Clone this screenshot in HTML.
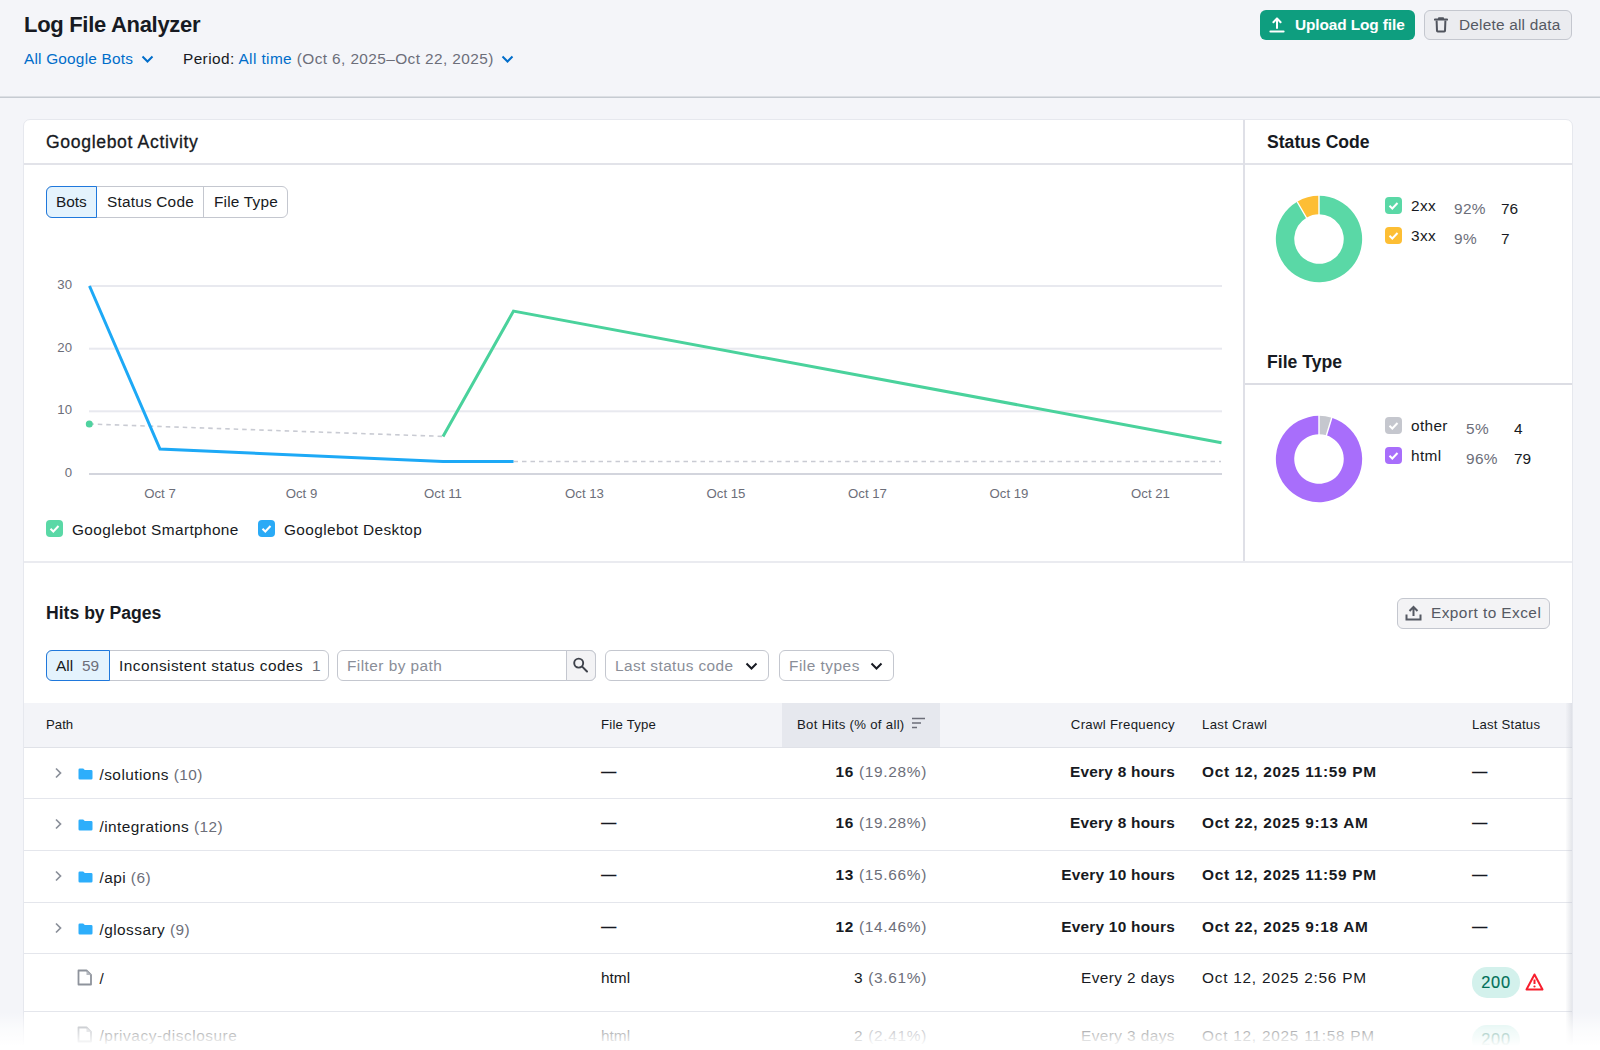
<!DOCTYPE html>
<html><head><meta charset="utf-8">
<style>
*{box-sizing:border-box;margin:0;padding:0}
html,body{width:1600px;height:1050px;overflow:hidden}
body{background:#F4F5F9;font-family:"Liberation Sans",sans-serif;color:#171A22;position:relative}
.a{position:absolute;white-space:nowrap}
.hdrline{position:absolute;left:0;top:96px;width:1600px;height:2px;background:linear-gradient(#DCDFE4 0 50%,#C6CBD2 50% 100%)}
.card{position:absolute;left:23px;top:119px;width:1550px;height:1000px;background:#fff;border:1px solid #E6E8EE;border-radius:7px;overflow:hidden}
.t14{font-size:15.4px}
.blue{color:#006DCA}
.grey{color:#6C6E79}
.btn{position:absolute;border-radius:6px}
.seg{position:absolute;border:1px solid #C4C7CF;border-radius:6px;background:#fff;overflow:hidden}
.seg .s{position:absolute;top:0;height:100%;border-right:1px solid #C4C7CF}
.chk{position:absolute;width:17px;height:17px;border-radius:4px}
.chk svg{position:absolute;left:0;top:0}
.line{position:absolute;background:#E4E6EC}
</style></head><body>

<!-- header -->
<div class="a" style="left:24px;top:10px;font-size:22px;font-weight:700;letter-spacing:-0.3px;line-height:30px">Log File Analyzer</div>
<div class="a blue t14" style="left:24px;top:50px;line-height:18px;letter-spacing:0.2px">All Google Bots</div>
<svg class="a" style="left:141px;top:54px" width="13" height="10" viewBox="0 0 13 10"><path d="M1.5 2.5 L6.5 7.5 L11.5 2.5" fill="none" stroke="#006DCA" stroke-width="2"/></svg>
<div class="a t14" style="left:183px;top:50px;line-height:18px;letter-spacing:0.4px">Period: <span class="blue">All time</span> <span class="grey">(Oct 6, 2025–Oct 22, 2025)</span></div>
<svg class="a" style="left:501px;top:54px" width="13" height="10" viewBox="0 0 13 10"><path d="M1.5 2.5 L6.5 7.5 L11.5 2.5" fill="none" stroke="#006DCA" stroke-width="2"/></svg>

<div class="btn" style="left:1260px;top:10px;width:155px;height:30px;background:#0E9E7F"></div>
<svg class="a" style="left:1269px;top:17px" width="16" height="16" viewBox="0 0 16 16"><path d="M8 11 V1.5 M4.4 5.3 L8 1.4 L11.6 5.3" fill="none" stroke="#fff" stroke-width="2" stroke-linecap="round" stroke-linejoin="round"/><path d="M1.4 14.5 H14.6" stroke="#fff" stroke-width="2" stroke-linecap="round"/></svg>
<div class="a" style="left:1295px;top:15px;font-size:15.4px;font-weight:700;color:#fff;line-height:20px;letter-spacing:-0.1px">Upload Log file</div>

<div class="btn" style="left:1424px;top:10px;width:148px;height:30px;background:#EBECF0;border:1px solid #C4C7CF"></div>
<svg class="a" style="left:1434px;top:17px" width="14" height="16" viewBox="0 0 14 16"><path d="M0.8 2.6 H13.2" stroke="#50545E" stroke-width="2" stroke-linecap="round"/><path d="M5 1.3 H9" stroke="#50545E" stroke-width="2.2" stroke-linecap="round"/><path d="M2.6 3.5 L3 13.8 Q3 14.6 3.8 14.6 H10.2 Q11 14.6 11 13.8 L11.4 3.5" fill="none" stroke="#50545E" stroke-width="2"/></svg>
<div class="a" style="left:1459px;top:15px;font-size:15.4px;color:#555963;line-height:20px;letter-spacing:0.2px">Delete all data</div>

<div class="hdrline"></div>

<!-- card -->
<div class="card"></div>

<svg class="a" style="left:0;top:0" width="1600" height="1050" viewBox="0 0 1600 1050">
  <!-- dividers -->
  <rect x="24" y="163" width="1548" height="2" fill="#E2E3E9"/>
  <rect x="1243" y="120" width="2" height="441" fill="#DFE0E7"/>
  <rect x="1245" y="383" width="327" height="2" fill="#DCDDE4"/>
  <rect x="24" y="561" width="1548" height="2" fill="#EAEBF0"/>
  <!-- gridlines -->
  <rect x="89" y="285" width="1133" height="2" fill="#E8E9EF"/>
  <rect x="89" y="347.7" width="1133" height="2" fill="#E8E9EF"/>
  <rect x="89" y="410.3" width="1133" height="2" fill="#E8E9EF"/>
  <rect x="89" y="473" width="1133" height="2" fill="#D3D5DD"/>
  <!-- dashed -->
  <path d="M89.3 424 L443 436.4" stroke="#C9CBD3" stroke-width="1.6" stroke-dasharray="4.5 4" fill="none"/>
  <path d="M513.5 461.5 L1221 461.5" stroke="#C9CBD3" stroke-width="1.6" stroke-dasharray="4.5 4" fill="none"/>
  <circle cx="89.3" cy="424" r="3.5" fill="#4FD29F"/>
  <!-- lines -->
  <path d="M89.5 286 L160 449 L443 461.5 L513.5 461.5" stroke="#1DA9F6" stroke-width="3" fill="none" stroke-linejoin="miter"/>
  <path d="M443 436.4 L513.5 311.1 L1221.5 442.7" stroke="#4AD29C" stroke-width="3" fill="none" stroke-linejoin="miter"/>
  <!-- donuts -->
  <path d="M1319.00 195.85 A43.15 43.15 0 1 1 1297.16 201.78 L1306.48 217.65 A24.75 24.75 0 1 0 1319.00 214.25Z" fill="#5AD8A6"/>
  <path d="M1297.16 201.78 A43.15 43.15 0 0 1 1319.00 195.85 L1319.00 214.25 A24.75 24.75 0 0 0 1306.48 217.65Z" fill="#FDBE34"/>
  <path d="M1319 195 V215 M1297 201.5 L1306.6 218" stroke="#fff" stroke-width="1.4"/>
  <path d="M1331.83 417.80 A43.15 43.15 0 1 1 1319.00 415.85 L1319.00 434.25 A24.75 24.75 0 1 0 1326.36 435.37Z" fill="#A86EFB"/>
  <path d="M1319.00 415.85 A43.15 43.15 0 0 1 1331.83 417.80 L1326.36 435.37 A24.75 24.75 0 0 0 1319.00 434.25Z" fill="#C5C7CE"/>
  <path d="M1319 415 V435 M1332 417 L1326.2 436" stroke="#fff" stroke-width="1.4"/>
</svg>

<!-- chart section text -->
<div class="a" style="left:46px;top:134px;font-size:17.6px;line-height:17.6px;letter-spacing:0.65px;-webkit-text-stroke:0.3px #171A22">Googlebot Activity</div>
<div class="a" style="left:1267px;top:134px;font-size:17.6px;line-height:17.6px;font-weight:700">Status Code</div>
<div class="a" style="left:1267px;top:354px;font-size:17.6px;line-height:17.6px;font-weight:700">File Type</div>

<div class="seg" style="left:46px;top:186px;width:242px;height:32px">
  <div class="s" style="left:51px;width:106px"></div>
</div>
<div class="a" style="left:46px;top:186px;width:51px;height:32px;border:1px solid #1F78DC;border-radius:6px 0 0 6px;background:#E4F3FD"></div>
<div class="a t14" style="left:56px;top:194px;line-height:15.4px">Bots</div>
<div class="a t14" style="left:107px;top:194px;line-height:15.4px;letter-spacing:0.2px">Status Code</div>
<div class="a t14" style="left:214px;top:194px;line-height:15.4px;letter-spacing:0.2px">File Type</div>

<!-- axis labels -->
<div class="a" style="left:40px;top:278px;width:32px;text-align:right;font-size:13.2px;line-height:13.2px;color:#6C6E79">30</div>
<div class="a" style="left:40px;top:341px;width:32px;text-align:right;font-size:13.2px;line-height:13.2px;color:#6C6E79">20</div>
<div class="a" style="left:40px;top:403px;width:32px;text-align:right;font-size:13.2px;line-height:13.2px;color:#6C6E79">10</div>
<div class="a" style="left:40px;top:466px;width:32px;text-align:right;font-size:13.2px;line-height:13.2px;color:#6C6E79">0</div>

<div class="a" style="left:110px;top:487px;width:100px;text-align:center;font-size:13.2px;line-height:13.2px;color:#6C6E79">Oct 7</div>
<div class="a" style="left:251.5px;top:487px;width:100px;text-align:center;font-size:13.2px;line-height:13.2px;color:#6C6E79">Oct 9</div>
<div class="a" style="left:393px;top:487px;width:100px;text-align:center;font-size:13.2px;line-height:13.2px;color:#6C6E79">Oct 11</div>
<div class="a" style="left:534.5px;top:487px;width:100px;text-align:center;font-size:13.2px;line-height:13.2px;color:#6C6E79">Oct 13</div>
<div class="a" style="left:676px;top:487px;width:100px;text-align:center;font-size:13.2px;line-height:13.2px;color:#6C6E79">Oct 15</div>
<div class="a" style="left:817.5px;top:487px;width:100px;text-align:center;font-size:13.2px;line-height:13.2px;color:#6C6E79">Oct 17</div>
<div class="a" style="left:959px;top:487px;width:100px;text-align:center;font-size:13.2px;line-height:13.2px;color:#6C6E79">Oct 19</div>
<div class="a" style="left:1100.5px;top:487px;width:100px;text-align:center;font-size:13.2px;line-height:13.2px;color:#6C6E79">Oct 21</div>

<!-- legend -->
<div class="chk" style="left:46px;top:520px;background:#5AD8A6"><svg width="17" height="17" viewBox="0 0 17 17"><path d="M4.5 8.8 L7.3 11.5 L12.5 6" fill="none" stroke="#fff" stroke-width="2"/></svg></div>
<div class="a t14" style="left:72px;top:522px;line-height:15.4px;letter-spacing:0.38px">Googlebot Smartphone</div>
<div class="chk" style="left:258px;top:520px;background:#2AAAF6"><svg width="17" height="17" viewBox="0 0 17 17"><path d="M4.5 8.8 L7.3 11.5 L12.5 6" fill="none" stroke="#fff" stroke-width="2"/></svg></div>
<div class="a t14" style="left:284px;top:522px;line-height:15.4px;letter-spacing:0.38px">Googlebot Desktop</div>

<!-- status legend -->
<div class="chk" style="left:1385px;top:197px;background:#5AD8A6"><svg width="17" height="17" viewBox="0 0 17 17"><path d="M4.5 8.8 L7.3 11.5 L12.5 6" fill="none" stroke="#fff" stroke-width="2"/></svg></div>
<div class="a t14" style="left:1411px;top:198px;line-height:15.4px;letter-spacing:0.35px">2xx</div>
<div class="a t14 grey" style="left:1454px;top:201px;line-height:15.4px;letter-spacing:0.35px">92%</div>
<div class="a t14" style="left:1501px;top:201px;line-height:15.4px">76</div>
<div class="chk" style="left:1385px;top:227px;background:#FDBE34"><svg width="17" height="17" viewBox="0 0 17 17"><path d="M4.5 8.8 L7.3 11.5 L12.5 6" fill="none" stroke="#fff" stroke-width="2"/></svg></div>
<div class="a t14" style="left:1411px;top:228px;line-height:15.4px;letter-spacing:0.35px">3xx</div>
<div class="a t14 grey" style="left:1454px;top:231px;line-height:15.4px;letter-spacing:0.35px">9%</div>
<div class="a t14" style="left:1501px;top:231px;line-height:15.4px">7</div>

<div class="chk" style="left:1385px;top:417px;background:#C5C7CE"><svg width="17" height="17" viewBox="0 0 17 17"><path d="M4.5 8.8 L7.3 11.5 L12.5 6" fill="none" stroke="#fff" stroke-width="2"/></svg></div>
<div class="a t14" style="left:1411px;top:418px;line-height:15.4px;letter-spacing:0.35px">other</div>
<div class="a t14 grey" style="left:1466px;top:421px;line-height:15.4px;letter-spacing:0.35px">5%</div>
<div class="a t14" style="left:1514px;top:421px;line-height:15.4px">4</div>
<div class="chk" style="left:1385px;top:447px;background:#A86EFB"><svg width="17" height="17" viewBox="0 0 17 17"><path d="M4.5 8.8 L7.3 11.5 L12.5 6" fill="none" stroke="#fff" stroke-width="2"/></svg></div>
<div class="a t14" style="left:1411px;top:448px;line-height:15.4px;letter-spacing:0.35px">html</div>
<div class="a t14 grey" style="left:1466px;top:451px;line-height:15.4px;letter-spacing:0.35px">96%</div>
<div class="a t14" style="left:1514px;top:451px;line-height:15.4px">79</div>


<!-- hits by pages -->
<div class="a" style="left:46px;top:605px;font-size:17.6px;line-height:17.6px;font-weight:700">Hits by Pages</div>
<div class="btn" style="left:1397px;top:598px;width:153px;height:31px;background:#F3F3F5;border:1px solid #C4C7CF"></div>
<svg class="a" style="left:1405px;top:605px" width="17" height="16" viewBox="0 0 17 16"><path d="M8.5 11 V2 M4.5 6 L8.5 2 L12.5 6" fill="none" stroke="#555963" stroke-width="2"/><path d="M1.5 9.5 V14.5 H15.5 V9.5" fill="none" stroke="#555963" stroke-width="2"/></svg>
<div class="a t14" style="left:1431px;top:605px;line-height:15.4px;color:#555963;letter-spacing:0.45px">Export to Excel</div>

<div class="seg" style="left:46px;top:650px;width:283px;height:31px"></div>
<div class="a" style="left:46px;top:650px;width:64px;height:31px;border:1px solid #1F78DC;border-radius:6px 0 0 6px;background:#E4F3FD"></div>
<div class="a t14" style="left:56px;top:658px;line-height:15.4px">All</div>
<div class="a t14 grey" style="left:82px;top:658px;line-height:15.4px">59</div>
<div class="a t14" style="left:119px;top:658px;line-height:15.4px;letter-spacing:0.45px">Inconsistent status codes</div>
<div class="a t14 grey" style="left:312px;top:658px;line-height:15.4px">1</div>

<div class="seg" style="left:337px;top:650px;width:259px;height:31px"></div>
<div class="a" style="left:566px;top:650px;width:30px;height:31px;background:#F3F3F5;border:1px solid #C4C7CF;border-radius:0 6px 6px 0"></div>
<svg class="a" style="left:572px;top:657px" width="17" height="17" viewBox="0 0 17 17"><circle cx="6.7" cy="6.1" r="4.5" fill="none" stroke="#3E424B" stroke-width="1.9"/><path d="M10.2 9.6 L15 14.5" stroke="#3E424B" stroke-width="2" stroke-linecap="round"/></svg>
<div class="a t14" style="left:347px;top:658px;line-height:15.4px;color:#8A8E98;letter-spacing:0.45px">Filter by path</div>

<div class="seg" style="left:605px;top:650px;width:164px;height:31px"></div>
<div class="a t14" style="left:615px;top:658px;line-height:15.4px;color:#8A8E98;letter-spacing:0.4px">Last status code</div>
<svg class="a" style="left:745px;top:661px" width="13" height="10" viewBox="0 0 13 10"><path d="M1.5 2.5 L6.5 7.5 L11.5 2.5" fill="none" stroke="#171A22" stroke-width="2"/></svg>
<div class="seg" style="left:779px;top:650px;width:115px;height:31px"></div>
<div class="a t14" style="left:789px;top:658px;line-height:15.4px;color:#8A8E98;letter-spacing:0.5px">File types</div>
<svg class="a" style="left:870px;top:661px" width="13" height="10" viewBox="0 0 13 10"><path d="M1.5 2.5 L6.5 7.5 L11.5 2.5" fill="none" stroke="#171A22" stroke-width="2"/></svg>

<!-- table header -->
<div class="a" style="left:24px;top:703px;width:1548px;height:44px;background:#F3F4F8"></div>
<div class="a" style="left:782px;top:703px;width:158px;height:44px;background:#E6E8EE"></div>
<div class="a" style="left:24px;top:746.5px;width:1548px;height:1px;background:#E0E2E8"></div>
<div class="a" style="left:46px;top:718px;font-size:13.2px;line-height:13.2px">Path</div>
<div class="a" style="left:601px;top:718px;font-size:13.2px;line-height:13.2px;letter-spacing:0.2px">File Type</div>
<div class="a" style="left:797px;top:718px;font-size:13.2px;line-height:13.2px;letter-spacing:0.3px">Bot Hits (% of all)</div>
<svg class="a" style="left:911px;top:717px" width="15" height="12" viewBox="0 0 15 12"><path d="M1 1.5 H14 M1 6 H10 M1 10.5 H6" stroke="#6C6E79" stroke-width="1.6"/></svg>
<div class="a" style="left:975px;top:718px;width:200px;text-align:right;font-size:13.2px;line-height:13.2px;letter-spacing:0.3px">Crawl Frequency</div>
<div class="a" style="left:1202px;top:718px;font-size:13.2px;line-height:13.2px;letter-spacing:0.3px">Last Crawl</div>
<div class="a" style="left:1472px;top:718px;font-size:13.2px;line-height:13.2px;letter-spacing:0.2px">Last Status</div>

<div class="a" style="left:24px;top:798.17px;width:1548px;height:1px;background:#E4E6EC"></div>
<svg class="a" style="left:54px;top:766.50px" width="9" height="12" viewBox="0 0 9 12"><path d="M2 1.5 L6.5 6 L2 10.5" fill="none" stroke="#8A8F99" stroke-width="1.7"/></svg>
<svg class="a" style="left:78px;top:767.50px" width="15" height="12" viewBox="0 0 15 12"><path d="M0.5 1.8 Q0.5 0.5 1.8 0.5 H5.2 L6.8 2 H13.2 Q14.5 2 14.5 3.3 V10.2 Q14.5 11.5 13.2 11.5 H1.8 Q0.5 11.5 0.5 10.2Z" fill="#2DAEFB"/></svg>
<div class="a t14" style="left:99.5px;top:766.00px;line-height:18px;letter-spacing:0.45px">/solutions <span class="grey">(10)</span></div>
<div class="a t14" style="left:601px;top:763.50px;line-height:15.4px;font-weight:700">—</div>
<div class="a t14" style="left:727px;top:763.50px;width:200px;text-align:right;line-height:15.4px;letter-spacing:0.7px"><b>16</b> <span class="grey">(19.28%)</span></div>
<div class="a t14" style="left:875px;top:763.50px;width:300px;text-align:right;line-height:15.4px;font-weight:700;letter-spacing:0.25px">Every 8 hours</div>
<div class="a t14" style="left:1202px;top:763.50px;line-height:15.4px;font-weight:700;letter-spacing:0.7px">Oct 12, 2025 11:59 PM</div>
<div class="a t14" style="left:1472px;top:763.50px;line-height:15.4px;font-weight:700">—</div>
<div class="a" style="left:24px;top:849.83px;width:1548px;height:1px;background:#E4E6EC"></div>
<svg class="a" style="left:54px;top:818.17px" width="9" height="12" viewBox="0 0 9 12"><path d="M2 1.5 L6.5 6 L2 10.5" fill="none" stroke="#8A8F99" stroke-width="1.7"/></svg>
<svg class="a" style="left:78px;top:819.17px" width="15" height="12" viewBox="0 0 15 12"><path d="M0.5 1.8 Q0.5 0.5 1.8 0.5 H5.2 L6.8 2 H13.2 Q14.5 2 14.5 3.3 V10.2 Q14.5 11.5 13.2 11.5 H1.8 Q0.5 11.5 0.5 10.2Z" fill="#2DAEFB"/></svg>
<div class="a t14" style="left:99.5px;top:817.67px;line-height:18px;letter-spacing:0.45px">/integrations <span class="grey">(12)</span></div>
<div class="a t14" style="left:601px;top:815.17px;line-height:15.4px;font-weight:700">—</div>
<div class="a t14" style="left:727px;top:815.17px;width:200px;text-align:right;line-height:15.4px;letter-spacing:0.7px"><b>16</b> <span class="grey">(19.28%)</span></div>
<div class="a t14" style="left:875px;top:815.17px;width:300px;text-align:right;line-height:15.4px;font-weight:700;letter-spacing:0.25px">Every 8 hours</div>
<div class="a t14" style="left:1202px;top:815.17px;line-height:15.4px;font-weight:700;letter-spacing:0.7px">Oct 22, 2025 9:13 AM</div>
<div class="a t14" style="left:1472px;top:815.17px;line-height:15.4px;font-weight:700">—</div>
<div class="a" style="left:24px;top:901.50px;width:1548px;height:1px;background:#E4E6EC"></div>
<svg class="a" style="left:54px;top:869.83px" width="9" height="12" viewBox="0 0 9 12"><path d="M2 1.5 L6.5 6 L2 10.5" fill="none" stroke="#8A8F99" stroke-width="1.7"/></svg>
<svg class="a" style="left:78px;top:870.83px" width="15" height="12" viewBox="0 0 15 12"><path d="M0.5 1.8 Q0.5 0.5 1.8 0.5 H5.2 L6.8 2 H13.2 Q14.5 2 14.5 3.3 V10.2 Q14.5 11.5 13.2 11.5 H1.8 Q0.5 11.5 0.5 10.2Z" fill="#2DAEFB"/></svg>
<div class="a t14" style="left:99.5px;top:869.33px;line-height:18px;letter-spacing:0.45px">/api <span class="grey">(6)</span></div>
<div class="a t14" style="left:601px;top:866.83px;line-height:15.4px;font-weight:700">—</div>
<div class="a t14" style="left:727px;top:866.83px;width:200px;text-align:right;line-height:15.4px;letter-spacing:0.7px"><b>13</b> <span class="grey">(15.66%)</span></div>
<div class="a t14" style="left:875px;top:866.83px;width:300px;text-align:right;line-height:15.4px;font-weight:700;letter-spacing:0.25px">Every 10 hours</div>
<div class="a t14" style="left:1202px;top:866.83px;line-height:15.4px;font-weight:700;letter-spacing:0.7px">Oct 12, 2025 11:59 PM</div>
<div class="a t14" style="left:1472px;top:866.83px;line-height:15.4px;font-weight:700">—</div>
<div class="a" style="left:24px;top:953.17px;width:1548px;height:1px;background:#E4E6EC"></div>
<svg class="a" style="left:54px;top:921.50px" width="9" height="12" viewBox="0 0 9 12"><path d="M2 1.5 L6.5 6 L2 10.5" fill="none" stroke="#8A8F99" stroke-width="1.7"/></svg>
<svg class="a" style="left:78px;top:922.50px" width="15" height="12" viewBox="0 0 15 12"><path d="M0.5 1.8 Q0.5 0.5 1.8 0.5 H5.2 L6.8 2 H13.2 Q14.5 2 14.5 3.3 V10.2 Q14.5 11.5 13.2 11.5 H1.8 Q0.5 11.5 0.5 10.2Z" fill="#2DAEFB"/></svg>
<div class="a t14" style="left:99.5px;top:921.00px;line-height:18px;letter-spacing:0.45px">/glossary <span class="grey">(9)</span></div>
<div class="a t14" style="left:601px;top:918.50px;line-height:15.4px;font-weight:700">—</div>
<div class="a t14" style="left:727px;top:918.50px;width:200px;text-align:right;line-height:15.4px;letter-spacing:0.7px"><b>12</b> <span class="grey">(14.46%)</span></div>
<div class="a t14" style="left:875px;top:918.50px;width:300px;text-align:right;line-height:15.4px;font-weight:700;letter-spacing:0.25px">Every 10 hours</div>
<div class="a t14" style="left:1202px;top:918.50px;line-height:15.4px;font-weight:700;letter-spacing:0.7px">Oct 22, 2025 9:18 AM</div>
<div class="a t14" style="left:1472px;top:918.50px;line-height:15.4px;font-weight:700">—</div>
<div class="a" style="left:24px;top:1010.50px;width:1548px;height:1px;background:#E4E6EC"></div>
<svg class="a" style="left:77px;top:968.67px" width="16" height="17" viewBox="0 0 16 17"><path d="M1.5 1.5 H9.5 L14 6 V15.5 H1.5Z" fill="none" stroke="#8E939C" stroke-width="1.8" stroke-linejoin="round"/><path d="M9.5 1.5 V6 H14Z" fill="#B5B9C0"/></svg>
<div class="a t14" style="left:99.5px;top:969.67px;line-height:18px;letter-spacing:0.45px">/</div>
<div class="a t14" style="left:601px;top:970.17px;line-height:15.4px;">html</div>
<div class="a t14" style="left:727px;top:970.17px;width:200px;text-align:right;line-height:15.4px;letter-spacing:0.7px">3 <span class="grey">(3.61%)</span></div>
<div class="a t14" style="left:875px;top:970.17px;width:300px;text-align:right;line-height:15.4px;font-weight:400;letter-spacing:0.42px">Every 2 days</div>
<div class="a t14" style="left:1202px;top:970.17px;line-height:15.4px;font-weight:400;letter-spacing:0.75px">Oct 12, 2025 2:56 PM</div>
<div class="a" style="left:1472px;top:967.17px;width:48px;height:30.5px;border-radius:15px;background:#D3F1EC"></div>
<div class="a t14" style="left:1472px;top:974.67px;width:48px;text-align:center;line-height:15.4px;font-size:16.4px;color:#006F59;letter-spacing:0.7px;-webkit-text-stroke:0.15px #006F59">200</div>
<svg class="a" style="left:1525px;top:972.67px" width="19" height="18" viewBox="0 0 19 18"><path d="M9.5 1.5 L17.5 16.5 H1.5Z" fill="none" stroke="#F71E2D" stroke-width="2" stroke-linejoin="round"/><path d="M9.5 6.5 V11" stroke="#F71E2D" stroke-width="2"/><circle cx="9.5" cy="13.5" r="1.1" fill="#F71E2D"/></svg>
<svg class="a" style="left:77px;top:1026px" width="16" height="17" viewBox="0 0 16 17"><path d="M1.5 1.5 H9.5 L14 6 V15.5 H1.5Z" fill="none" stroke="#8E939C" stroke-width="1.8" stroke-linejoin="round"/><path d="M9.5 1.5 V6 H14Z" fill="#B5B9C0"/></svg>
<div class="a t14" style="left:99.5px;top:1027px;line-height:18px;letter-spacing:0.55px">/privacy-disclosure</div>
<div class="a t14" style="left:601px;top:1027.50px;line-height:15.4px;">html</div>
<div class="a t14" style="left:727px;top:1027.50px;width:200px;text-align:right;line-height:15.4px;letter-spacing:0.7px">2 <span class="grey">(2.41%)</span></div>
<div class="a t14" style="left:875px;top:1027.50px;width:300px;text-align:right;line-height:15.4px;font-weight:400;letter-spacing:0.42px">Every 3 days</div>
<div class="a t14" style="left:1202px;top:1027.50px;line-height:15.4px;font-weight:400;letter-spacing:0.75px">Oct 12, 2025 11:58 PM</div>
<div class="a" style="left:1472px;top:1024.50px;width:48px;height:30.5px;border-radius:15px;background:#D3F1EC"></div>
<div class="a t14" style="left:1472px;top:1032.00px;width:48px;text-align:center;line-height:15.4px;font-size:16.4px;color:#006F59;letter-spacing:0.7px;-webkit-text-stroke:0.15px #006F59">200</div>

<!-- right shadow -->
<div class="a" style="left:1566px;top:703px;width:6px;height:360px;background:linear-gradient(to right,rgba(190,194,205,0.05),rgba(190,194,205,0.4))"></div>
<!-- fade -->
<div class="a" style="left:0;top:1010px;width:1600px;height:40px;background:linear-gradient(to bottom,rgba(255,255,255,0) 5%,rgba(255,255,255,0.62) 47.5%,rgba(255,255,255,0.88) 77.5%,rgba(255,255,255,1) 90%)"></div>

</body></html>
